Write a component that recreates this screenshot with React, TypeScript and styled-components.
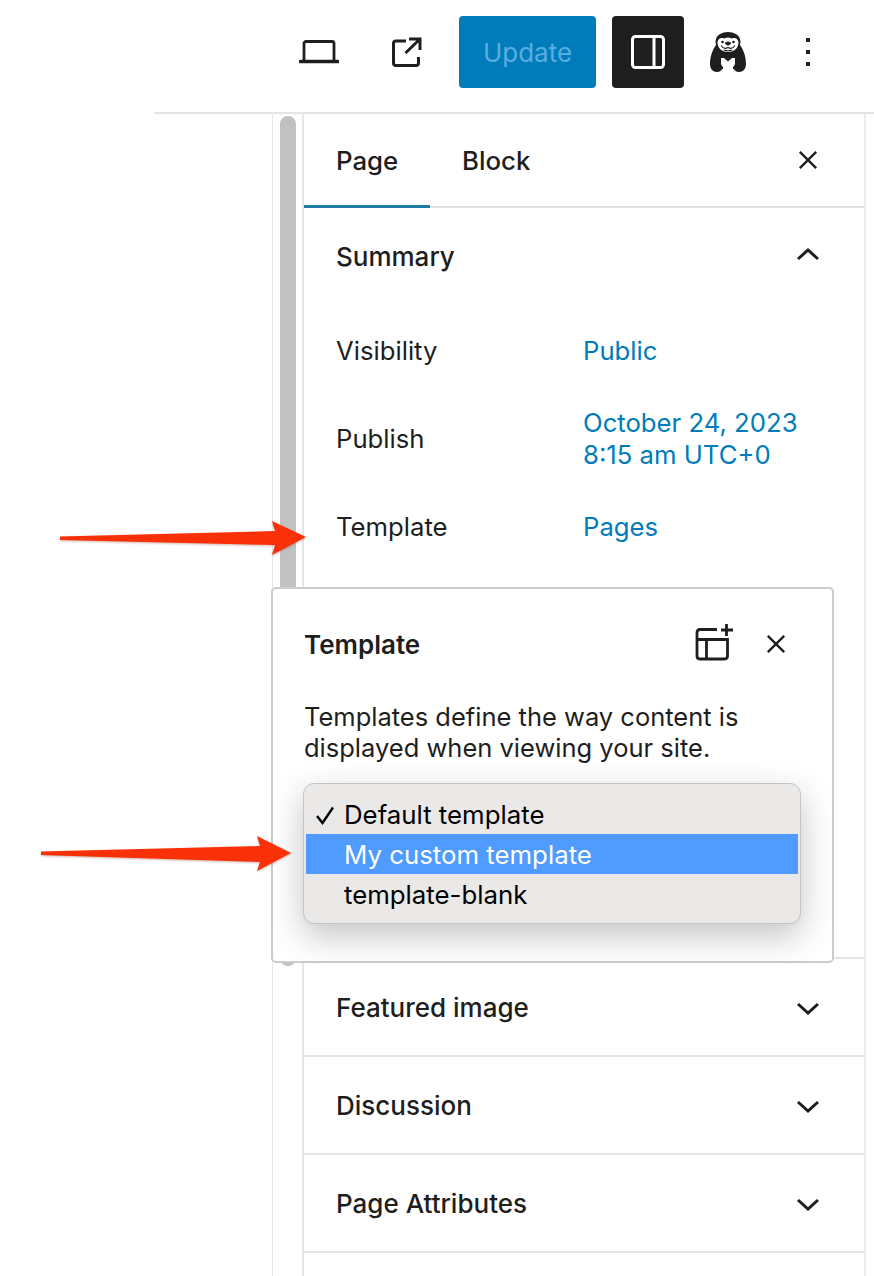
import React from "react";
import styled, { createGlobalStyle } from "styled-components";

const Global = createGlobalStyle`
  html, body { margin: 0; padding: 0; background: #fff; }
  body { font-family: Inter, "Liberation Sans", sans-serif; color: #1e1e1e; }
  * { box-sizing: border-box; }
`;

const Page = styled.div`
  position: relative;
  width: 874px;
  height: 1276px;
  overflow: hidden;
  background: #fff;
`;

const Header = styled.header`
  display: flex;
  align-items: center;
  justify-content: flex-end;
  height: 114px;
  margin-left: 154px;
  padding: 0 30px 8px 0;
  border-bottom: 2px solid #e4e4e4;
`;

const IconSlot = styled.div<{ $gap?: number }>`
  display: flex;
  align-items: center;
  justify-content: center;
  width: 72px;
  height: 72px;
  margin-left: ${(p) => p.$gap ?? 8}px;
  flex: none;
`;

const UpdateButton = styled.button`
  width: 137px;
  height: 72px;
  margin-left: 16px;
  flex: none;
  border: 0;
  border-radius: 4px;
  background: #007cba;
  color: #5aade0;
  font: 400 26px Inter, sans-serif;
`;

const ToggleButton = styled.button`
  display: flex;
  align-items: center;
  justify-content: center;
  width: 72px;
  height: 72px;
  margin-left: 16px;
  flex: none;
  border: 0;
  padding: 0;
  border-radius: 4px;
  background: #1e1e1e;
`;

const Body = styled.div`
  display: flex;
  height: 1162px;
`;

const ScrollGutter = styled.div`
  width: 32px;
  margin-left: 272px;
  padding: 2px 7px 0 7px;
  border-left: 1px solid #e6e6e6;
  border-right: 2px solid #e6e6e6;
  flex: none;
`;

const ScrollThumb = styled.div`
  width: 16px;
  height: 850px;
  border-radius: 8px;
  background: #c1c1c1;
`;

const Sidebar = styled.aside`
  width: 562px;
  border-right: 2px solid #ececec;
  flex: none;
`;

const Tabs = styled.div`
  display: flex;
  align-items: stretch;
  height: 94px;
  border-bottom: 2px solid #e0e0e0;
`;

const Tab = styled.div<{ $active?: boolean }>`
  display: flex;
  align-items: center;
  width: ${(p) => (p.$active ? "126px" : "auto")};
  padding: 0 32px 2px;
  height: 94px;
  font-size: 25.8px;
  font-weight: 500;
  ${(p) => (p.$active ? "box-shadow: inset 0 -3px 0 #1e7ba6;" : "")}
`;

const TabClose = styled.div`
  display: flex;
  align-items: center;
  justify-content: center;
  width: 30px;
  margin-left: auto;
  margin-right: 41px;
`;

const PanelTitle = styled.div`
  display: flex;
  align-items: center;
  justify-content: space-between;
  height: 98px;
  padding: 0 44px 0 32px;
  font-size: 26px;
  font-weight: 500;
  border-bottom: 2px solid #e4e4e4;
  svg { margin-top: 3px; }
`;

const SummaryTitle = styled(PanelTitle)`
  padding-bottom: 2px;
  border-bottom: 0;
  svg { margin-top: -4px; }
`;

const SummaryBody = styled.div`
  height: 653px;
  padding-top: 1px;
  border-bottom: 2px solid #e4e4e4;
`;

const Row = styled.div<{ $h: number }>`
  display: flex;
  align-items: center;
  height: ${(p) => p.$h}px;
  padding-left: 32px;
  font-size: 25.7px;
  line-height: 32px;
`;

const RowLabel = styled.div`
  width: 247px;
  flex: none;
`;

const RowValue = styled.div`
  color: #007cba;
`;

const Popover = styled.div`
  position: absolute;
  left: 271px;
  top: 587px;
  width: 563px;
  height: 376px;
  padding: 32px 32px 0 31px;
  border: 2px solid #cccccc;
  border-radius: 5px;
  background: #fff;
`;

const PopHead = styled.div`
  display: flex;
  align-items: center;
  height: 46px;
  font-size: 26px;
  font-weight: 600;
`;

const PopTitle = styled.div`
  flex: 1;
`;

const PopAdd = styled.svg`
  margin-top: -4px;
`;

const PopClose = styled.div`
  display: flex;
  margin: 0 14px 0 31px;
`;

const PopText = styled.p`
  margin: 34px 0 0;
  font-size: 25.5px;
  line-height: 31px;
`;

const Menu = styled.div`
  width: 498px;
  height: 141px;
  margin: 20px 0 0 -1px;
  padding: 10px 2px;
  border: 1px solid #c6c3c3;
  border-radius: 11px;
  background: #ebe8e8;
  box-shadow: 0 12px 34px rgba(0, 0, 0, 0.24);
  color: #000;
  font-size: 25.8px;
`;

const MenuItem = styled.div<{ $active?: boolean }>`
  position: relative;
  height: 40px;
  padding-left: 38px;
  line-height: 42px;
  background: ${(p) => (p.$active ? "#4f9bff" : "transparent")};
  color: ${(p) => (p.$active ? "#fff" : "#000")};
`;

const CheckMark = styled.svg`
  position: absolute;
  left: 9px;
  top: 12px;
`;

const ArrowLayer = styled.svg`
  position: absolute;
  left: 0;
  top: 0;
  pointer-events: none;
  filter: drop-shadow(0 1px 1px rgba(120, 40, 20, 0.35));
`;

const Close = ({ size = 22 }: { size?: number }) => (
  <svg width={size} height={size} viewBox="0 0 22 22" fill="none" stroke="#1e1e1e" strokeWidth="2.6">
    <path d="M2 2 20 20M20 2 2 20" />
  </svg>
);

const Chevron = ({ up }: { up?: boolean }) => (
  <svg width="24" height="14" viewBox="0 0 24 14" fill="none" stroke="#1e1e1e" strokeWidth="3">
    <path d={up ? "M2 12 12 3 22 12" : "M2 2 12 11 22 2"} />
  </svg>
);

const Otter = () => (
  <svg width="40" height="40" viewBox="0 0 40 40">
    <path
      fill="#1e1e1e"
      d="M20 0C26 0 31 3 32 7c1 3 0 5 0 6 3 4 6 11 6 19 0 5-3 8-7 8-3 0-4.500-1.500-5-3H14c-.5 1.500-2 3-5 3-4 0-7-3-7-8 0-8 3-15 6-19 0-1-1-3 0-6C9 3 14 0 20 0z"
    />
    <path
      fill="#fff"
      d="M20 5.500c-1.500 0-3 1-4 1-3-1.500-6.500.5-6.500 4 0 5 4 9.500 10.500 9.500s10.500-4.500 10.500-9.500c0-3.500-3.500-5.500-6.500-4-1 0-2.500-1-4-1z"
    />
    <path fill="#fff" d="M13 26h14v5c0 2-1 3-2 4v5H15v-5c-1-1-2-2-2-4z" />
    <g fill="#1e1e1e">
      <path d="M16 26h8l-4 3.500z" />
      <circle cx="14.500" cy="10" r="1.300" />
      <circle cx="25.500" cy="10" r="1.300" />
      <path d="M17 10.500c1-1.100 5-1.100 6 0 .5 1.100-1.500 3-3 3s-3.500-1.900-3-3z" />
    </g>
    <path fill="none" stroke="#1e1e1e" strokeWidth="1.100" d="M13 13.500c2 3 4.500 3.500 7 2 2.500 1.500 5 1 7-2M16 18c2.500 1 5.500 1 8 0" />
  </svg>
);

const panels = ["Featured image", "Discussion", "Page Attributes"];

export default function App() {
  return (
    <Page>
      <Global />
      <Header>
        <IconSlot $gap={0}>
          <svg width="40" height="24" viewBox="0 0 40 24" fill="none" stroke="#1e1e1e" strokeWidth="2.8">
            <path d="M5 20V3.500c0-1 .8-2 2-2h26c1.200 0 2 1 2 2V20" />
            <path d="M1.500 21.500h37" strokeWidth="3.600" strokeLinecap="round" />
          </svg>
        </IconSlot>
        <IconSlot $gap={16}>
          <svg width="30" height="30" viewBox="0 0 30 30" fill="none" stroke="#1e1e1e" strokeWidth="3">
            <path d="M14 4H4C2.600 4 1.500 5.100 1.500 6.500V26c0 1.400 1.100 2.500 2.500 2.500h20c1.400 0 2.500-1.100 2.500-2.500v-6" />
            <path d="M13.500 16 28 2M17 2h11v11" />
          </svg>
        </IconSlot>
        <UpdateButton>Update</UpdateButton>
        <ToggleButton>
          <svg width="34" height="34" viewBox="0 0 34 34" fill="none" stroke="#fff" strokeWidth="3">
            <rect x="1.500" y="1.500" width="31" height="31" rx="3" />
            <path d="M23 2v30" />
          </svg>
        </ToggleButton>
        <IconSlot>
          <Otter />
        </IconSlot>
        <IconSlot>
          <svg width="4" height="28" viewBox="0 0 4 28" fill="#1e1e1e">
            <rect width="4" height="4" />
            <rect y="12" width="4" height="4" />
            <rect y="24" width="4" height="4" />
          </svg>
        </IconSlot>
      </Header>
      <Body>
        <ScrollGutter>
          <ScrollThumb />
        </ScrollGutter>
        <Sidebar>
          <Tabs>
            <Tab $active>Page</Tab>
            <Tab>Block</Tab>
            <TabClose>
              <Close size={20} />
            </TabClose>
          </Tabs>
          <SummaryTitle>
            Summary
            <Chevron up />
          </SummaryTitle>
          <SummaryBody>
            <Row $h={88}>
              <RowLabel>Visibility</RowLabel>
              <RowValue>Public</RowValue>
            </Row>
            <Row $h={88}>
              <RowLabel>Publish</RowLabel>
              <RowValue>
                October 24, 2023
                <br />
                8:15 am UTC+0
              </RowValue>
            </Row>
            <Row $h={88}>
              <RowLabel>Template</RowLabel>
              <RowValue>Pages</RowValue>
            </Row>
          </SummaryBody>
          {panels.map((t) => (
            <PanelTitle key={t}>
              {t}
              <Chevron />
            </PanelTitle>
          ))}
        </Sidebar>
      </Body>
      <Popover>
        <PopHead>
          <PopTitle>Template</PopTitle>
          <PopAdd width="40" height="40" viewBox="0 0 40 40" fill="none" stroke="#1e1e1e" strokeWidth="2.8">
            <path d="M22 7.500H5C3 7.500 2 8.500 2 10.500V34c0 2 1 3 3 3h24.500c2 0 3-1 3-3V17.500H2M11.500 17.500V37" />
            <path d="M31.500 2v12M26 8h12" />
          </PopAdd>
          <PopClose>
            <Close size={20} />
          </PopClose>
        </PopHead>
        <PopText>
          Templates define the way content is
          <br />
          displayed when viewing your site.
        </PopText>
        <Menu>
          <MenuItem>
            <CheckMark width="20" height="19" viewBox="0 0 20 19" fill="none" stroke="#000" strokeWidth="2.4">
              <path d="M2 10 7.500 17 18 1.500" />
            </CheckMark>
            Default template
          </MenuItem>
          <MenuItem $active>My custom template</MenuItem>
          <MenuItem>template-blank</MenuItem>
        </Menu>
      </Popover>
      <ArrowLayer width="874" height="1276" viewBox="0 0 874 1276">
        <path fill="#fa3008" d="M60 536.500 275 531 272 521 306 537 272 555 275 545 60 540z" />
        <path fill="#fa3008" d="M41 851.500 260 846 257 836 291 853 257 871 260 862 41 855z" />
      </ArrowLayer>
    </Page>
  );
}
